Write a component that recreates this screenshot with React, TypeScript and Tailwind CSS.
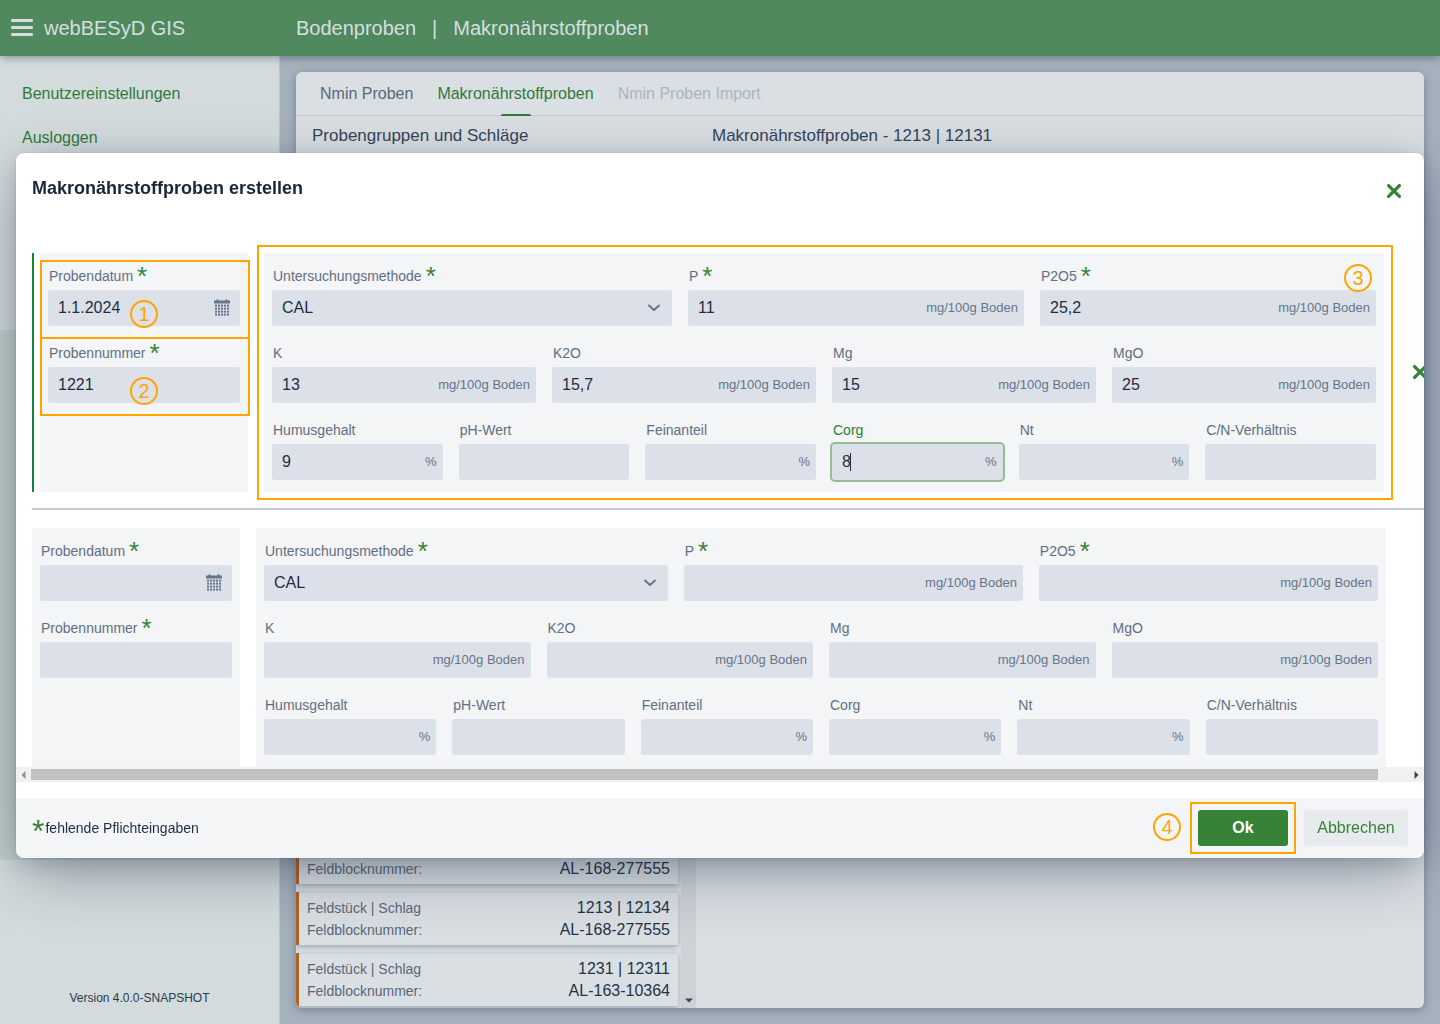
import React, { useId } from 'react';
import clsx from 'clsx';

interface FieldProps {
  label: string;
  value?: string;
  suffix?: string;
  required?: boolean;
  active?: boolean;
  calendar?: boolean;
}

interface Probe {
  datum?: string;
  nummer?: string;
  methode: string;
  hauptwerte: FieldProps[];
  naehrstoffe: FieldProps[];
  anteile: FieldProps[];
}

const BODEN = 'mg/100g Boden';

const proben: Probe[] = [
  {
    datum: '1.1.2024',
    nummer: '1221',
    methode: 'CAL',
    hauptwerte: [
      { label: 'P', value: '11', suffix: BODEN, required: true },
      { label: 'P2O5', value: '25,2', suffix: BODEN, required: true },
    ],
    naehrstoffe: [
      { label: 'K', value: '13', suffix: BODEN },
      { label: 'K2O', value: '15,7', suffix: BODEN },
      { label: 'Mg', value: '15', suffix: BODEN },
      { label: 'MgO', value: '25', suffix: BODEN },
    ],
    anteile: [
      { label: 'Humusgehalt', value: '9', suffix: '%' },
      { label: 'pH-Wert' },
      { label: 'Feinanteil', suffix: '%' },
      { label: 'Corg', value: '8', suffix: '%', active: true },
      { label: 'Nt', suffix: '%' },
      { label: 'C/N-Verhältnis' },
    ],
  },
  {
    methode: 'CAL',
    hauptwerte: [
      { label: 'P', suffix: BODEN, required: true },
      { label: 'P2O5', suffix: BODEN, required: true },
    ],
    naehrstoffe: [
      { label: 'K', suffix: BODEN },
      { label: 'K2O', suffix: BODEN },
      { label: 'Mg', suffix: BODEN },
      { label: 'MgO', suffix: BODEN },
    ],
    anteile: [
      { label: 'Humusgehalt', suffix: '%' },
      { label: 'pH-Wert' },
      { label: 'Feinanteil', suffix: '%' },
      { label: 'Corg', suffix: '%' },
      { label: 'Nt', suffix: '%' },
      { label: 'C/N-Verhältnis' },
    ],
  },
];

const schlaege = [
  { schlag: '1213 | 12133', feldblock: 'AL-168-277555' },
  { schlag: '1213 | 12134', feldblock: 'AL-168-277555' },
  { schlag: '1231 | 12311', feldblock: 'AL-163-10364' },
];

const CalendarIcon = () => (
  <svg className="h-[18px] w-4" viewBox="0 0 16 18" fill="#66758a" aria-hidden="true">
    <path d="M0 1.5h2.4V.4h2.2v1.1h6.8V.4h2.2v1.1H16V4.6H0z" />
    {[5.6, 8.6, 11.6, 14.6].map((y) =>
      [1, 4, 7, 10, 13].map((x) => <rect key={`${x}-${y}`} x={x} y={y} width="2.1" height="2" />)
    )}
  </svg>
);

const CrossIcon = () => (
  <svg className="w-4 h-4" viewBox="0 0 16 16" fill="none" stroke="#368236" strokeWidth="3.3" strokeLinecap="round" aria-hidden="true">
    <path d="M2.6 2.6l10.8 10.8M13.4 2.6L2.6 13.4" />
  </svg>
);

const FieldLabel: React.FC<{ id: string; label: string; required?: boolean; active?: boolean }> = ({
  id,
  label,
  required,
  active,
}) => (
  <label
    htmlFor={id}
    className={clsx(
      'flex h-[29px] items-center gap-1 pl-px text-sm whitespace-nowrap',
      active ? 'text-[#2c7c34]' : 'text-[#626f82]'
    )}
  >
    {label}
    {required && <span className="h-[26px] text-[26px] leading-[26px] text-[#368236]">*</span>}
  </label>
);

const Field: React.FC<FieldProps> = ({ label, value, suffix, required, active, calendar }) => {
  const id = useId();
  return (
    <div className="min-w-0 pb-3">
      <FieldLabel id={id} label={label} required={required} active={active} />
      <div
        className={clsx(
          'relative flex h-9 items-center rounded-[3px] bg-[#dce0e8]',
          active && 'ring-2 ring-[#94bd97]'
        )}
      >
        <input
          id={id}
          type="text"
          defaultValue={value}
          className="h-full w-full min-w-0 bg-transparent pl-[10px] text-base text-[#1f2d42] outline-none"
        />
        {active && <span className="absolute left-[18px] h-[18px] w-px bg-[#1f2d42]" />}
        {suffix && <span className="pr-[6px] text-[13px] whitespace-nowrap text-[#66758a]">{suffix}</span>}
        {calendar && (
          <button type="button" aria-label="Kalender" className="pr-[10px]">
            <CalendarIcon />
          </button>
        )}
      </div>
    </div>
  );
};

const MethodSelect: React.FC<{ value: string }> = ({ value }) => {
  const id = useId();
  return (
    <div className="min-w-0 pb-3">
      <FieldLabel id={id} label="Untersuchungsmethode" required />
      <div className="relative flex h-9 items-center">
        <select
          id={id}
          defaultValue={value}
          className="h-full w-full appearance-none rounded-[3px] bg-[#dce0e8] pl-[10px] text-base text-[#1f2d42] outline-none"
        >
          <option>{value}</option>
        </select>
        <svg
          className="pointer-events-none absolute right-[11px] h-2 w-[14px]"
          viewBox="0 0 14 8"
          fill="none"
          stroke="#66758a"
          strokeWidth="2"
          strokeLinecap="round"
          strokeLinejoin="round"
          aria-hidden="true"
        >
          <path d="M2 1.5l5 4.6 5-4.6" />
        </svg>
      </div>
    </div>
  );
};

const Marker: React.FC<{ n: number; className: string }> = ({ n, className }) => (
  <span
    className={clsx(
      'pointer-events-none absolute flex h-7 w-7 items-center justify-center rounded-full border-2 border-[#ffa500] text-xl font-normal text-[#ffa500]',
      className
    )}
  >
    {n}
  </span>
);

const Frame: React.FC<{ className: string }> = ({ className }) => (
  <span className={clsx('pointer-events-none absolute border-2 border-[#ffa500]', className)} />
);

const ProbeRow: React.FC<{ probe: Probe; saved?: boolean }> = ({ probe, saved }) => (
  <div
    className={clsx(
      'flex items-stretch gap-4',
      saved ? 'border-l-2 border-[#158443] pl-[6px]' : 'pr-[54px]'
    )}
  >
    <div className="relative w-[208px] shrink-0 bg-[#f3f5f7] px-2 pt-2">
      <Field label="Probendatum" value={probe.datum} required calendar />
      <Field label="Probennummer" value={probe.nummer} required />
      {saved && (
        <>
          <Frame className="top-[7px] left-0 -right-[2px] h-[79px]" />
          <Frame className="top-[84px] left-0 -right-[2px] h-[79px]" />
          <Marker n={1} className="top-[47px] left-[90px]" />
          <Marker n={2} className="top-[124px] left-[90px]" />
        </>
      )}
    </div>
    <div className="relative min-w-0 flex-1 bg-[#f3f5f7] px-2 pt-2">
      <div className="grid grid-cols-[25fr_21fr_21fr] gap-4">
        <MethodSelect value={probe.methode} />
        {probe.hauptwerte.map((field) => (
          <Field key={field.label} {...field} />
        ))}
      </div>
      <div className="grid grid-cols-4 gap-4">
        {probe.naehrstoffe.map((field) => (
          <Field key={field.label} {...field} />
        ))}
      </div>
      <div className="grid grid-cols-6 gap-4">
        {probe.anteile.map((field) => (
          <Field key={field.label} {...field} />
        ))}
      </div>
      {saved && (
        <>
          <Frame className="-top-2 -right-[9px] -bottom-2 -left-[7px]" />
          <Marker n={3} className="top-[11px] right-3" />
        </>
      )}
    </div>
    {saved && (
      <button type="button" aria-label="Probe entfernen" className="flex w-10 items-center justify-center pb-[2px]">
        <CrossIcon />
      </button>
    )}
  </div>
);

const Sidebar = () => (
  <aside className="flex w-[280px] shrink-0 flex-col border-r border-[#bcc5ca] bg-[#d3dbdc]">
    <nav className="flex h-[274px] flex-col px-[22px] pt-4 text-base text-[#2f7a3d]">
      <a href="#einstellungen" className="leading-[44px]">Benutzereinstellungen</a>
      <a href="#ausloggen" className="leading-[44px]">Ausloggen</a>
    </nav>
    <div className="flex-1 bg-[#c3d0cd]" />
    <div className="flex h-[164px] items-end justify-center pb-[18px] text-xs text-[#2c3a4e]">
      Version 4.0.0-SNAPSHOT
    </div>
  </aside>
);

const SchlagList = () => (
  <div className="flex min-h-0 flex-1">
    <ul className="flex min-w-0 flex-1 flex-col justify-end gap-2 overflow-hidden pr-[3px] pb-[2px]">
      {schlaege.map(({ schlag, feldblock }) => (
        <li
          key={schlag}
          className="shrink-0 border-l-[3px] border-[#b4611f] bg-[#dadfe3] shadow-[0_2px_5px_rgba(27,43,65,0.3)]"
        >
          <dl className="grid grid-cols-[auto_1fr] border-t border-[#cbd1d6] px-2 py-1 leading-[22px]">
            <dt className="text-sm leading-[22px] text-[#5b6878]">Feldstück | Schlag</dt>
            <dd className="text-right text-[#243349]">{schlag}</dd>
            <dt className="text-sm leading-[22px] text-[#5b6878]">Feldblocknummer:</dt>
            <dd className="text-right text-[#243349]">{feldblock}</dd>
          </dl>
        </li>
      ))}
    </ul>
    <div className="flex w-[15px] items-end justify-center bg-[#cdd2d6] pb-[5px]">
      <svg className="h-[5px] w-2" viewBox="0 0 8 5" fill="#37465a" aria-hidden="true">
        <path d="M0 0.5h8L4 4.5z" />
      </svg>
    </div>
  </div>
);

const CreateDialog = () => (
  <div className="fixed inset-0 z-20 flex items-start px-4 pt-[153px]">
    <form
      role="dialog"
      aria-label="Makronährstoffproben erstellen"
      className="w-full overflow-hidden rounded-lg bg-white shadow-[0_0_0_1px_rgba(27,43,65,0.05),0_6px_24px_-4px_rgba(27,43,65,0.25),0_18px_64px_-6px_rgba(27,43,65,0.4)]"
    >
      <header className="flex h-[100px] items-start justify-between pt-5 pr-3 pl-4">
        <h2 className="text-lg leading-[30px] font-bold text-[#1a2639]">Makronährstoffproben erstellen</h2>
        <button type="button" aria-label="Schließen" className="flex h-9 w-9 items-center justify-center">
          <CrossIcon />
        </button>
      </header>

      <div className="w-[calc(100%+32px)] px-4">
        <ProbeRow probe={proben[0]} saved />
        <hr className="mt-4 mb-[18px] border-t-2 border-[#c5cad4]" />
        <ProbeRow probe={proben[1]} />
      </div>

      <div className="flex h-[15px] items-center bg-[#f1f1f1]">
        <svg className="w-[15px] shrink-0 px-[5px]" viewBox="0 0 5 8" fill="#8b939e" aria-hidden="true">
          <path d="M4.5 0v8L0.5 4z" />
        </svg>
        <div className="flex-1 pr-[31px]">
          <div className="h-[11px] bg-[#c1c1c1]" />
        </div>
        <svg className="w-[15px] shrink-0 px-[5px]" viewBox="0 0 5 8" fill="#37465a" aria-hidden="true">
          <path d="M0.5 0v8l4-4z" />
        </svg>
      </div>

      <footer className="mt-4 flex h-[60px] items-center gap-4 bg-[#f3f5f7] px-4">
        <p className="mr-auto flex items-center gap-px text-sm text-[#1f2d42]">
          <span className="h-[30px] text-[32px] leading-[36px] text-[#368236]">*</span>
          fehlende Pflichteingaben
        </p>
        <button type="button" className="relative h-9 w-[90px] rounded-[3px] bg-[#368236] font-bold text-white">
          Ok
          <Frame className="-inset-2" />
          <Marker n={4} className="top-[3px] -left-[45px]" />
        </button>
        <button type="button" className="h-9 w-[104px] rounded-[3px] bg-[#e8ebee] text-[#368236]">
          Abbrechen
        </button>
      </footer>
    </form>
  </div>
);

export default function App() {
  return (
    <div className="flex h-screen flex-col overflow-hidden bg-[#a6b1be] font-['Liberation_Sans',Arial,sans-serif]">
      <header className="z-10 flex h-14 shrink-0 items-center bg-[#4f895d] text-xl text-[#d6dfe0] shadow-[0_2px_8px_rgba(27,43,65,0.4)]">
        <div className="flex w-[296px] items-center gap-[11px] pl-[11px]">
          <button type="button" aria-label="Menü" className="pb-px">
            <svg className="h-[17px] w-[22px]" viewBox="0 0 22 17" fill="#d6dfe0" aria-hidden="true">
              <rect width="22" height="3" rx="1.2" />
              <rect y="7" width="22" height="3" rx="1.2" />
              <rect y="14" width="22" height="3" rx="1.2" />
            </svg>
          </button>
          <span>webBESyD GIS</span>
        </div>
        <h1 className="flex gap-4">
          <span>Bodenproben</span>
          <span>|</span>
          <span>Makronährstoffproben</span>
        </h1>
      </header>

      <div className="flex min-h-0 flex-1">
        <Sidebar />
        <main className="flex min-w-0 flex-1 p-4">
          <section className="flex min-w-0 flex-1 flex-col overflow-hidden rounded-md bg-[#dadfe3] shadow-[0_2px_8px_rgba(27,43,65,0.35)]">
            <div role="tablist" className="flex h-11 shrink-0 gap-6 border-b border-[#c3c9ce] px-6 text-base">
              <button type="button" role="tab" className="text-[#5b6878]">Nmin Proben</button>
              <button type="button" role="tab" aria-selected="true" className="relative text-[#2f7a3d]">
                Makronährstoffproben
                <span className="absolute -bottom-px left-1/2 h-[2px] w-[30px] -translate-x-1/2 rounded-t-sm bg-[#2f7a3d]" />
              </button>
              <button type="button" role="tab" disabled className="text-[#abb5c0]">Nmin Proben Import</button>
            </div>
            <div className="flex min-h-0 flex-1 text-[#35445a]">
              <div className="flex w-[400px] flex-col">
                <h3 className="h-10 px-4 text-[17px] leading-[40px]">Probengruppen und Schläge</h3>
                <SchlagList />
              </div>
              <h3 className="px-4 text-[17px] leading-[40px]">Makronährstoffproben - 1213 | 12131</h3>
            </div>
          </section>
        </main>
      </div>

      <CreateDialog />
    </div>
  );
}
